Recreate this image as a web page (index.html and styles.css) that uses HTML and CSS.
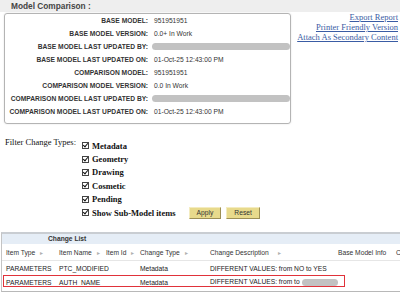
FILE: index.html
```html
<!DOCTYPE html>
<html lang="en">
<head>
  <meta charset="UTF-8">
  <title>Model Comparison</title>
  <link rel="stylesheet" href="styles.css">
</head>
<body>

  <div class="titlebar">Model Comparison :</div>

  <div class="top">
    <div class="panel">
      <div class="row"><span class="label">BASE MODEL:</span><span class="value">951951951</span></div>
      <div class="row"><span class="label">BASE MODEL VERSION:</span><span class="value">0.0+ In Work</span></div>
      <div class="row"><span class="label">BASE MODEL LAST UPDATED BY:</span><span class="value"><span class="blur"></span></span></div>
      <div class="row"><span class="label">BASE MODEL LAST UPDATED ON:</span><span class="value">01-Oct-25 12:43:00 PM</span></div>
      <div class="row"><span class="label">COMPARISON MODEL:</span><span class="value">951951951</span></div>
      <div class="row"><span class="label">COMPARISON MODEL VERSION:</span><span class="value">0.0 In Work</span></div>
      <div class="row"><span class="label">COMPARISON MODEL LAST UPDATED BY:</span><span class="value"><span class="blur"></span></span></div>
      <div class="row"><span class="label">COMPARISON MODEL LAST UPDATED ON:</span><span class="value">01-Oct-25 12:43:00 PM</span></div>
    </div>
    <div class="links">
      <a href="#">Export Report</a>
      <a href="#">Printer Friendly Version</a>
      <a href="#">Attach As Secondary Content</a>
    </div>
  </div>

  <div class="filter">
    <div class="filter-label">Filter Change Types:</div>
    <div class="types">
      <label class="type"><span class="chk"></span>Metadata</label>
      <label class="type"><span class="chk"></span>Geometry</label>
      <label class="type"><span class="chk"></span>Drawing</label>
      <label class="type"><span class="chk"></span>Cosmetic</label>
      <label class="type"><span class="chk"></span>Pending</label>
      <div class="type">
        <label class="type"><span class="chk"></span>Show Sub-Model items</label>
        <button class="btn btn-first">Apply</button>
        <button class="btn">Reset</button>
      </div>
    </div>
  </div>

  <div class="changes">
    <div class="changes-title">Change List</div>
    <table class="grid">
      <colgroup>
        <col style="width:53px">
        <col style="width:47px">
        <col style="width:34px">
        <col style="width:70px">
        <col style="width:128px">
        <col style="width:58px">
        <col style="width:80px">
      </colgroup>
      <thead>
        <tr>
          <th>Item Type<span class="sort">&#9656;</span></th>
          <th>Item Name<span class="sort">&#9656;</span></th>
          <th>Item Id<span class="sort">&#9656;</span></th>
          <th>Change Type<span class="sort">&#9656;</span></th>
          <th>Change Description<span class="sort wide">&#9656;</span></th>
          <th>Base Model Info</th>
          <th>Comparison Model Info</th>
        </tr>
      </thead>
      <tbody>
        <tr>
          <td>PARAMETERS</td>
          <td>PTC_MODIFIED</td>
          <td></td>
          <td>Metadata</td>
          <td>DIFFERENT VALUES: from NO to YES</td>
          <td></td>
          <td></td>
        </tr>
        <tr>
          <td>PARAMETERS</td>
          <td>AUTH_NAME</td>
          <td></td>
          <td>Metadata</td>
          <td>DIFFERENT VALUES: from to<span class="blur small"></span></td>
          <td></td>
          <td></td>
        </tr>
      </tbody>
    </table>
    <div class="mark"></div>
  </div>

</body>
</html>
```

FILE: styles.css
```css
html, body {
  overflow: hidden;
}

body {
  font-family: "Liberation Sans", Arial, sans-serif;
  font-size: 6.7px;
  color: #222;
  background: white;
  margin: 0;
}

.titlebar {
  background: #eeeeee;
  height: 12px;
  line-height: 12px;
  padding-left: 11px;
  font-size: 8.3px;
  font-weight: bold;
  color: #444;
}

.top {
  display: flex;
  align-items: flex-start;
  margin-top: 1px;
}

.panel {
  width: 285px;
  margin-left: 4px;
  padding-bottom: 5px;
  border: 1px solid #b4b4b4;
  border-radius: 3px;
  box-shadow: 0 0 2px rgba(0, 0, 0, 0.12);
}

.row {
  display: grid;
  grid-template-columns: 143px 1fr;
  column-gap: 6px;
  height: 13px;
  align-items: center;
}

.label {
  text-align: right;
  font-weight: bold;
  color: #333;
  white-space: nowrap;
}

.value {
  display: flex;
  align-items: center;
  color: #333;
  white-space: nowrap;
}

.blur {
  flex: 1;
  height: 7px;
  margin-left: -2px;
  margin-right: 0;
  border-radius: 4px;
  background: #c2c2c2;
}

.blur.small {
  display: inline-block;
  width: 36px;
  margin-left: 2px;
  vertical-align: middle;
}

.links {
  flex: 1;
  display: flex;
  flex-direction: column;
  align-items: flex-end;
  padding-right: 2px;
  margin-top: -1px;
  font-family: "Liberation Serif", "Times New Roman", serif;
  font-size: 8.5px;
  line-height: 10px;
}

.links a {
  color: #3a5ca4;
}

.filter {
  display: flex;
  margin-top: 15px;
  padding-left: 5px;
  font-family: "Liberation Serif", "Times New Roman", serif;
  font-size: 8.5px;
  color: #111;
}

.filter-label {
  width: 77px;
  line-height: 13.4px;
  margin-top: -3px;
}

.type {
  display: flex;
  align-items: center;
  height: 13.4px;
  font-weight: bold;
}

.chk {
  position: relative;
  width: 5px;
  height: 5px;
  margin-right: 3px;
  border: 1px solid #444;
  background: white;
}

.chk::after {
  content: "";
  position: absolute;
  left: 1px;
  top: -1px;
  width: 2px;
  height: 4px;
  border-right: 1px solid #111;
  border-bottom: 1px solid #111;
  transform: rotate(40deg);
}

.btn {
  height: 12px;
  padding: 0 7px;
  margin-left: 5px;
  font-family: "Liberation Sans", Arial, sans-serif;
  font-size: 6.7px;
  color: #333;
  background: #e8da8c;
  border: 1px solid;
  border-color: #f4ecc0 #9c8f55 #9c8f55 #f4ecc0;
  cursor: pointer;
}

.btn-first {
  margin-left: 13px;
}

.changes {
  position: relative;
  margin-top: 13px;
  margin-left: 1px;
  padding-bottom: 2px;
  border-top: 2px solid #c9cdd2;
  border-left: 1px solid #c4c4c4;
  border-bottom: 1px solid #b8b8b8;
}

.changes-title {
  height: 10px;
  line-height: 10px;
  padding-left: 46px;
  background: #e5edf6;
  font-weight: bold;
  color: #333;
}

.grid {
  width: 470px;
  table-layout: fixed;
  border-collapse: collapse;
}

.grid th, .grid td {
  padding: 0 0 0 4px;
  text-align: left;
  white-space: nowrap;
}

.grid th {
  height: 16px;
  font-weight: normal;
  color: #333;
  overflow: hidden;
  border-bottom: 1px solid #e6e6e6;
}

.grid td {
  height: 14px;
  color: #222;
  overflow: visible;
}

.sort {
  margin-left: 5px;
  font-size: 6px;
  color: #b0b0b0;
}

.sort.wide {
  margin-left: 9px;
}

.mark {
  position: absolute;
  left: 1px;
  top: 41px;
  width: 340px;
  height: 10px;
  border: 1.5px solid #e0323a;
}
```
